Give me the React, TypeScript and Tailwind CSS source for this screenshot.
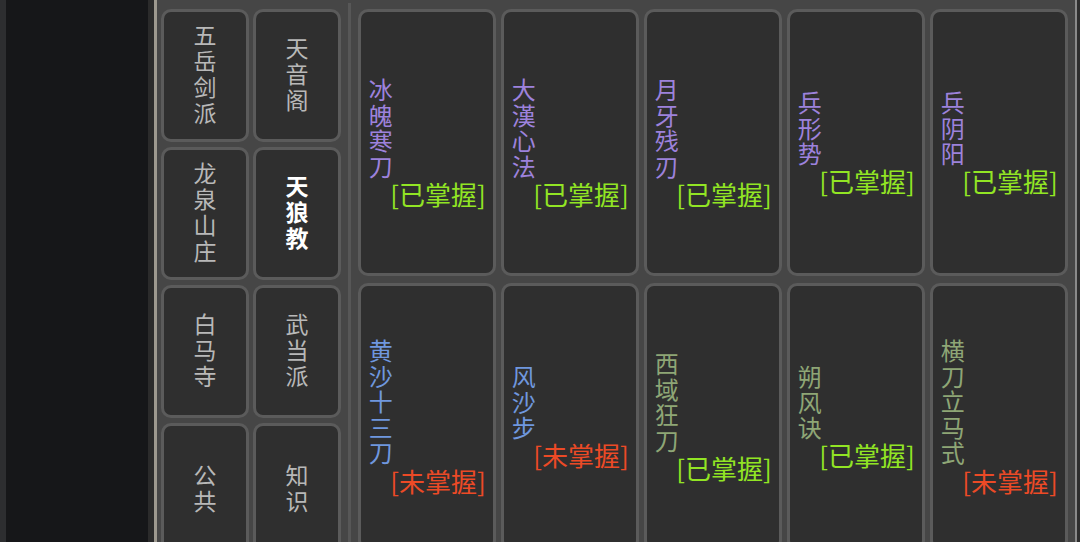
import React from "react";

type Skill = {
    name: string;
    tone: "purple" | "blue" | "olive";
    learned: boolean;
};

const sects = ["五岳剑派", "天音阁", "龙泉山庄", "天狼教", "白马寺", "武当派", "公共", "知识"];
const activeSect = "天狼教";

const skills: Skill[] = [
    { name: "冰魄寒刀", tone: "purple", learned: true },
    { name: "大漢心法", tone: "purple", learned: true },
    { name: "月牙残刃", tone: "purple", learned: true },
    { name: "兵形势", tone: "purple", learned: true },
    { name: "兵阴阳", tone: "purple", learned: true },
    { name: "黄沙十三刀", tone: "blue", learned: false },
    { name: "风沙步", tone: "blue", learned: false },
    { name: "西域狂刀", tone: "olive", learned: true },
    { name: "朔风诀", tone: "olive", learned: true },
    { name: "横刀立马式", tone: "olive", learned: false },
];

const toneClass = {
    purple: "text-[#9d82dc]",
    blue: "text-[#6f97de]",
    olive: "text-[#8ea676]",
};

function SectButton({ name }: { name: string }) {
    const active = name === activeSect;
    return (
        <button className="h-[133px] rounded-[10px] border-[3px] border-[#5b5b5b] bg-[#2f2f2f] flex items-center justify-center">
            <span
                className={
                    active
                        ? "[writing-mode:vertical-rl] text-[23px] leading-[26px] tracking-[3px] font-bold text-white"
                        : "[writing-mode:vertical-rl] text-[23px] leading-[26px] tracking-[3px] text-[#b8b8b8]"
                }
            >
                {name}
            </span>
        </button>
    );
}

function SkillCard({ skill }: { skill: Skill }) {
    return (
        <div className="h-[267px] rounded-[10px] border-[3px] border-[#5b5b5b] bg-[#2f2f2f] flex items-center justify-center">
            <div className="grid grid-cols-[auto_auto]">
                <div className={`col-start-1 row-start-1 [writing-mode:vertical-rl] text-[24px] leading-[25px] tracking-[1.5px] ${toneClass[skill.tone]}`}>
                    {skill.name}
                </div>
                <div
                    className={
                        skill.learned
                            ? "col-start-2 row-start-2 -ml-[3px] text-[26px] leading-[27px] whitespace-nowrap text-[#92e524]"
                            : "col-start-2 row-start-2 -ml-[3px] text-[26px] leading-[27px] whitespace-nowrap text-[#ec4a26]"
                    }
                >
                    {skill.learned ? "[已掌握]" : "[未掌握]"}
                </div>
            </div>
        </div>
    );
}

export default function App() {
    return (
        <div className="w-[1080px] h-[542px] overflow-hidden flex bg-[#18191b] font-['Noto_Sans_CJK_SC',sans-serif]">
            {/* left edge */}
            <div className="w-[6px] shrink-0 bg-[#2d2e30]" />
            <div className="w-[142px] shrink-0 bg-[#161719]" />
            <div className="w-[6px] shrink-0 bg-[#2b2b2b]" />
            <div className="w-[3px] shrink-0 bg-[#9d998f]" />

            {/* main panel */}
            <div className="flex-1 flex bg-[#464646] pt-[9px] pl-[4px] pr-[5px]">
                <div className="grid grid-cols-[88px_88px] gap-x-[4px] gap-y-[5px] content-start">
                    {sects.map((s) => (
                        <SectButton key={s} name={s} />
                    ))}
                </div>

                <div className="w-[3px] shrink-0 bg-[#575757] ml-[7px] mr-[7px] -mt-[6px]" />

                <div className="grid grid-cols-[repeat(5,138px)] gap-x-[5px] gap-y-[7px] content-start">
                    {skills.map((sk) => (
                        <SkillCard key={sk.name} skill={sk} />
                    ))}
                </div>
            </div>

            {/* right edge */}
            <div className="w-[2px] shrink-0 bg-[#8a8a8a]" />
            <div className="w-[3px] shrink-0 bg-[#2e2e2e]" />
        </div>
    );
}
